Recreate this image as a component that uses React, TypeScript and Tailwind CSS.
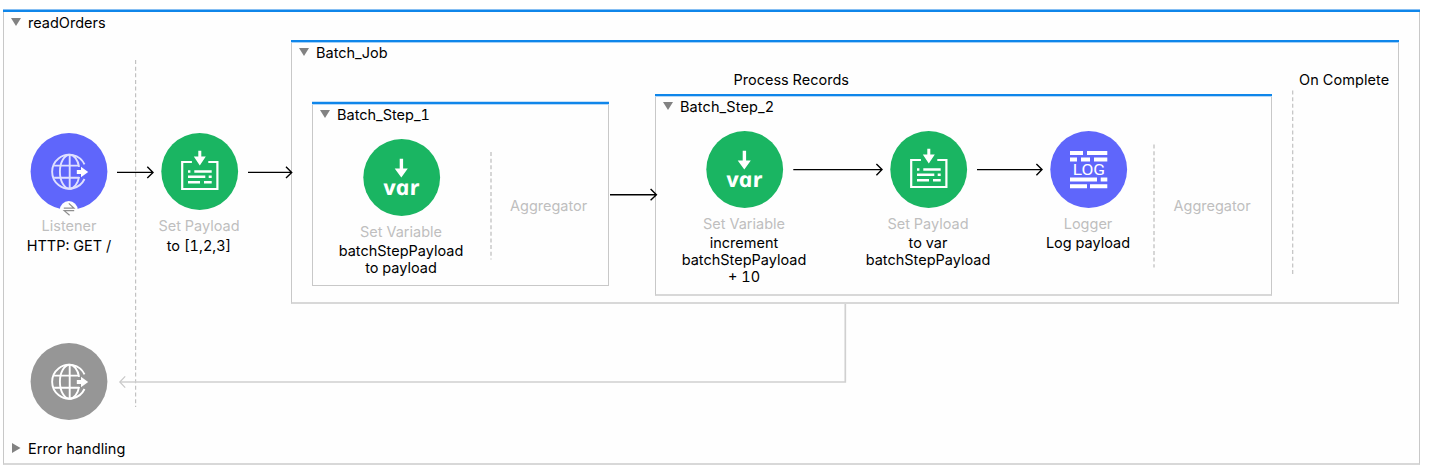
import type { ReactNode } from "react";

const Globe = ({ stroke }: { stroke: string }) => (
  <g fill="none" stroke={stroke} strokeWidth="1.9">
    <path d="M53.9 31.4A17 17 0 1 0 53.9 46" />
    <path d="M39.1 21.7V55.7" />
    <path d="M39.1 21.7A9.8 17 0 0 0 39.1 55.7" />
    <path d="M39.1 21.7A9.8 17 0 0 1 48.5 33.8" />
    <path d="M39.1 55.7A9.8 17 0 0 0 48.5 43.8" />
    <path d="M23.5 32.6H48M23.5 44.8H48" />
    <path d="M46.2 39H51" stroke="#fff" strokeWidth="4" />
    <path d="M50.4 33.8L57.6 39L50.4 44.2Z" fill="#fff" stroke="none" />
  </g>
);

const Disc = ({ fill, box = "-1.3 0 78 77", children }: { fill: string; box?: string; children: ReactNode }) => (
  <svg width="78" height="77" viewBox={box} className="block shrink-0 overflow-visible">
    <circle cx="38.4" cy="38.5" r="38.4" fill={fill} />
    {children}
  </svg>
);

const ListenerIcon = () => (
  <Disc fill="#5f66fb" box="-0.6 0 78 77">
    <Globe stroke="#dfe0ff" />
    <circle cx="38.2" cy="77" r="9" fill="#fefefe" />
    <path d="M33.2 75.2H43.4L38.2 70.4M43.6 77.6H33.6L39 82.2" fill="none" stroke="#8f8f8f" strokeWidth="1.2" />
  </Disc>
);

const ResponseIcon = () => (
  <Disc fill="#969696" box="-0.6 0 78 77">
    <Globe stroke="#fff" />
  </Disc>
);

const PayloadIcon = () => (
  <Disc fill="#1ab562">
    <g fill="#fff">
      <path d="M30.6 29H20.9V56H56.1V29H47" fill="none" stroke="#fff" strokeWidth="2.2" />
      <path d="M37 17.7H40V23.6H44.5L38.5 32.4L32.5 23.6H37Z" />
      <path d="M26.7 37.3h2.4v2.4h-2.4zM33 37.3h17.4v2.4H33zM26.7 42.6h17.3v2.4H26.7zM47.4 42.6h3v2.4h-3zM26.7 48h12v2.4h-12zM42.7 48h7.7v2.4h-7.7z" />
    </g>
  </Disc>
);

const VariableIcon = () => (
  <Disc fill="#1ab562">
    <path d="M36.4 19.7H39.8V29.4H44.5L38 38.4L31.4 29.4H36.4Z" fill="#fff" />
    <g transform="translate(21.4 55.5) skewX(12)">
      <text
        textLength="36"
        lengthAdjust="spacingAndGlyphs"
        fill="#fff"
        className="font-['Open_Sans',sans-serif] text-[21px] font-bold italic"
      >
        var
      </text>
    </g>
  </Disc>
);

const LoggerIcon = () => (
  <Disc fill="#5f66fb">
    <path
      d="M19.7 20h13v4h-13zM36.7 20h20.3v4H36.7zM19.7 26.5h7v4h-7zM30.7 26.5h9v4h-9zM43.7 26.5h13.3v4H43.7zM19.7 46.4h27v4h-27zM50.4 46.4h6.6v4h-6.6zM19.7 53.2h17v4h-17zM39.7 53.2h17.3v4H39.7z"
      fill="#fff"
    />
    <text
      x="22.4"
      y="44.1"
      textLength="32.4"
      lengthAdjust="spacingAndGlyphs"
      fill="#fff"
      className="font-[Roboto,sans-serif] text-[15.4px]"
    >
      LOG
    </text>
  </Disc>
);

const Node = ({ at, icon, type, lines }: { at: string; icon: ReactNode; type?: string; lines?: string[] }) => (
  <div className={`absolute flex w-[140px] flex-col items-center text-center ${at}`}>
    {icon}
    {type && <div className="mt-[7px] h-[19.4px] text-[#bfbfbf]">{type}</div>}
    {lines?.map((line) => (
      <div key={line} className="h-[17px]">
        {line}
      </div>
    ))}
  </div>
);

const Frame = ({ at, edge, title }: { at: string; edge: string; title: string }) => (
  <section className={`absolute border-x border-[#c8c8c8] ${at}`}>
    <div className={`-mx-px h-[2px] bg-[#0f86ea] ${edge}`} />
    <header className="flex items-start">
      <svg width="10" height="8" viewBox="0 0 10 8" className="mt-[6px] ml-[7px] shrink-0">
        <path d="M0 0H10L5 8Z" fill="#828282" />
      </svg>
      <h2 className="mt-[2px] ml-[7px]">{title}</h2>
    </header>
  </section>
);

const Connectors = () => (
  <svg width="1431" height="474" viewBox="0 0 1431 474" className="pointer-events-none absolute top-0 left-0" fill="none">
    <g stroke="#c2c2c2" strokeWidth="1.2" strokeDasharray="4 2.65">
      <path d="M135.6 60V407" />
      <path d="M491 152V259.5" stroke="#d2d2d2" strokeWidth="1.8" />
      <path d="M1154 144.5V267.5" stroke="#d2d2d2" strokeWidth="1.8" />
      <path d="M1292.7 90.5V276.5" />
    </g>
    <g stroke="#000" strokeWidth="1.4">
      <path d="M117 172.4H153M147.3 166.8L153 172.4L147.3 178" />
      <path d="M248 172.4H292M286 166.8L291.7 172.4L286 178" />
      <path d="M610 194.7H656.5M650.6 189.1L656.4 194.7L650.6 200.3" />
      <path d="M793.3 169.6H882M876.4 164L882 169.6L876.4 175.2" />
      <path d="M977 169.6H1042M1036.4 164L1042 169.6L1036.4 175.2" />
    </g>
    <path d="M845.3 304V382H120" stroke="#d0d0d0" strokeWidth="1.7" />
    <path d="M125.2 376.4L119.8 382L125.2 387.6" stroke="#c8c8c8" strokeWidth="1.2" />
  </svg>
);

export default function App() {
  return (
    <main className="relative h-[474px] w-[1431px] overflow-hidden bg-white font-['Inter',sans-serif] text-[14.5px] leading-[18px] whitespace-nowrap text-black tabular-nums">
      <Frame
        at="left-[3px] top-[10px] h-[455px] w-[1417px] border-b-2 border-b-[#d8d8d8] bg-[#fefefe]"
        edge="shadow-[0_-1px_0_#86bff3]"
        title="readOrders"
      />
      <Frame
        at="left-[291px] top-[40px] h-[264px] w-[1108px] border-b-2 border-b-[#d8d8d8]"
        edge="shadow-[0_1px_0_#a5d0f7]"
        title="Batch_Job"
      />
      <Frame at="left-[312px] top-[102px] h-[184px] w-[297px] border-b" edge="shadow-[0_1px_0_#b5d8f8,0_-1px_0_#c5e0f9]" title="Batch_Step_1" />
      <Frame
        at="left-[655px] top-[94px] h-[202px] w-[617px] border-b-2 border-b-[#d8d8d8] tracking-[0.1px]"
        edge="shadow-[0_1px_0_#b5d8f8]"
        title="Batch_Step_2"
      />
      <Connectors />

      <div className="absolute top-[71px] left-[733.5px]">Process Records</div>
      <div className="absolute top-[71px] left-[1299px] tracking-[0.08px]">On Complete</div>
      <div className="absolute top-[197px] left-[510px] text-[#bfbfbf]">Aggregator</div>
      <div className="absolute top-[197px] left-[1173.5px] text-[#bfbfbf]">Aggregator</div>

      <Node at="left-[-1px] top-[133.4px]" icon={<ListenerIcon />} type="Listener" lines={["HTTP: GET /"]} />
      <Node at="left-[129px] top-[133.4px]" icon={<PayloadIcon />} type="Set Payload" lines={["to [1,2,3]"]} />
      <Node at="left-[331px] top-[139px]" icon={<VariableIcon />} type="Set Variable" lines={["batchStepPayload", "to payload"]} />
      <Node
        at="left-[674px] top-[131px]"
        icon={<VariableIcon />}
        type="Set Variable"
        lines={["increment", "batchStepPayload", "+ 10"]}
      />
      <Node at="left-[858px] top-[131px]" icon={<PayloadIcon />} type="Set Payload" lines={["to var", "batchStepPayload"]} />
      <Node at="left-[1018px] top-[131px]" icon={<LoggerIcon />} type="Logger" lines={["Log payload"]} />
      <Node at="left-[-1px] top-[343px]" icon={<ResponseIcon />} />

      <div className="absolute top-[440px] left-3 flex items-start">
        <svg width="9" height="10" viewBox="0 0 9 10" className="mt-[3px]">
          <path d="M0 0V10L8.5 5Z" fill="#828282" />
        </svg>
        <span className="ml-[7px] tracking-[0.08px]">Error handling</span>
      </div>
    </main>
  );
}
